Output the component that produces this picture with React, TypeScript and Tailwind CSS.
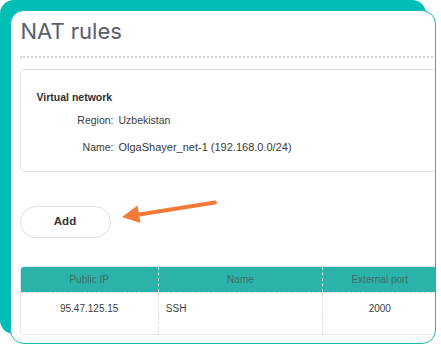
import React from "react";

export default function App() {
  return (
    <div className="w-[441px] h-[346px] bg-white overflow-hidden relative" style={{ fontFamily: '"Liberation Sans", Arial, sans-serif' }}>
      <div className="ml-[10px] mt-[10px] w-[426px] h-[334px] rounded-[14px] border-[1.5px] border-[#16bcb4] bg-white overflow-hidden shadow-[-10px_-10px_0_0_#00bdb5] pl-[8.5px]">
        <div className="w-[440px]">
          <h1 className="pt-[6px] pl-[1px] text-[22px] leading-[28px] text-[#58606c]" style={{ fontFamily: 'Inter, sans-serif' }}>NAT rules</h1>
          <div className="mt-[11px] border-b-2 border-dotted border-[#d6d6d6]" />
          <div className="mt-[11px] h-[103px] rounded-[4px] border border-[#e3e3e3] pl-[16px] pt-[20px]">
            <div className="text-[10.5px] font-bold text-[#2f2f2f] leading-[14px]">Virtual network</div>
            <div className="mt-[9px] grid grid-cols-[77px_1fr] gap-x-[5px] gap-y-[13px] text-[10.5px] leading-[14px] text-[#3a3a3a]">
              <div className="text-right">Region:</div>
              <div>Uzbekistan</div>
              <div className="text-right">Name:</div>
              <div className="text-[11px]">OlgaShayer_net-1 (192.168.0.0/24)</div>
            </div>
          </div>
          <div className="mt-[34px]">
            <button className="w-[91px] h-[32px] rounded-full border border-[#dedede] bg-white text-[11.5px] font-semibold text-[#333]">Add</button>
          </div>
          <div className="mt-[28px] w-[418px] rounded-[4px] border border-[#e6e6e6] overflow-hidden">
            <div className="flex h-[25px] bg-[#2bb3a9] text-[10px] text-[#436b68] items-center">
              <div className="w-[138px] text-center">Public IP</div>
              <div className="w-[165px] h-full flex items-center justify-center border-l border-dashed border-[#cfe9e6]">Name</div>
              <div className="w-[115px] h-full flex items-center justify-center border-l border-dashed border-[#cfe9e6]">External port</div>
            </div>
            <div className="flex h-[42px] text-[10px] text-[#3d3d3d] border-t border-dashed border-[#dcdcdc]">
              <div className="w-[138px] text-center pt-[8px]">95.47.125.15</div>
              <div className="w-[165px] pl-[7px] pt-[8px] border-l border-dashed border-[#dcdcdc]">SSH</div>
              <div className="w-[115px] text-center pt-[8px] border-l border-dashed border-[#dcdcdc]">2000</div>
            </div>
          </div>
        </div>
      </div>
      <svg className="absolute left-0 top-0 pointer-events-none" width="441" height="346" viewBox="0 0 441 346">
        <line x1="215" y1="202.5" x2="136" y2="215" stroke="#f47a3a" strokeWidth="4" strokeLinecap="round" />
        <polygon points="122,217 137.5,205.5 140.5,223" fill="#f47a3a" />
      </svg>
    </div>
  );
}
